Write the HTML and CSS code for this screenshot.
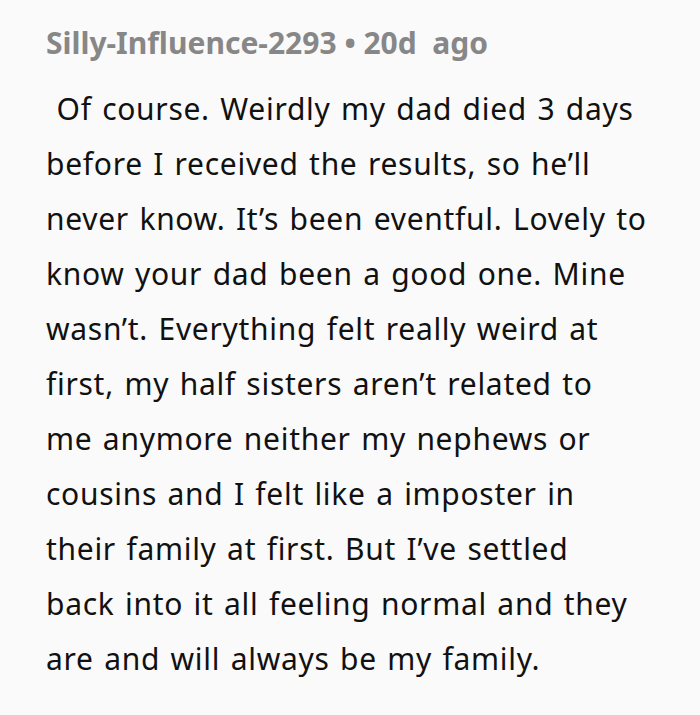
FILE: index.html
```html
<!DOCTYPE html>
<html>
<head>
<meta charset="utf-8">
<link rel="stylesheet" href="styles.css">
</head>
<body>
<div class="comment">
  <div class="meta">Silly-Influence-2293 • 20d&nbsp; ago</div>
  <p class="body">&nbsp;Of course. Weirdly my dad died 3 days<br>before I received the results, so he’ll<br>never know. It’s been eventful. Lovely to<br>know your dad been a good one. Mine<br>wasn’t. Everything felt really weird at<br>first, my half sisters aren’t related to<br>me anymore neither my nephews or<br>cousins and I felt like a imposter in<br>their family at first. But I’ve settled<br>back into it all feeling normal and they<br>are and will always be my family.</p>
</div>
</body>
</html>
```
FILE: styles.css
```css
html, body {
  margin: 0;
  padding: 0;
  background: #fafafa;
}
.comment {
  padding: 25px 20px 0 46px;
  font-family: "Noto Sans", "Open Sans", sans-serif;
}
.meta {
  font-weight: 700;
  color: #878787;
  font-size: 30px;
  line-height: 36px;
}
.body {
  margin: 20px 0 0 0;
  color: #111;
  font-size: 30px;
  line-height: 55px;
  letter-spacing: 0.7px;
  word-spacing: 2px;
  white-space: nowrap;
}
```
